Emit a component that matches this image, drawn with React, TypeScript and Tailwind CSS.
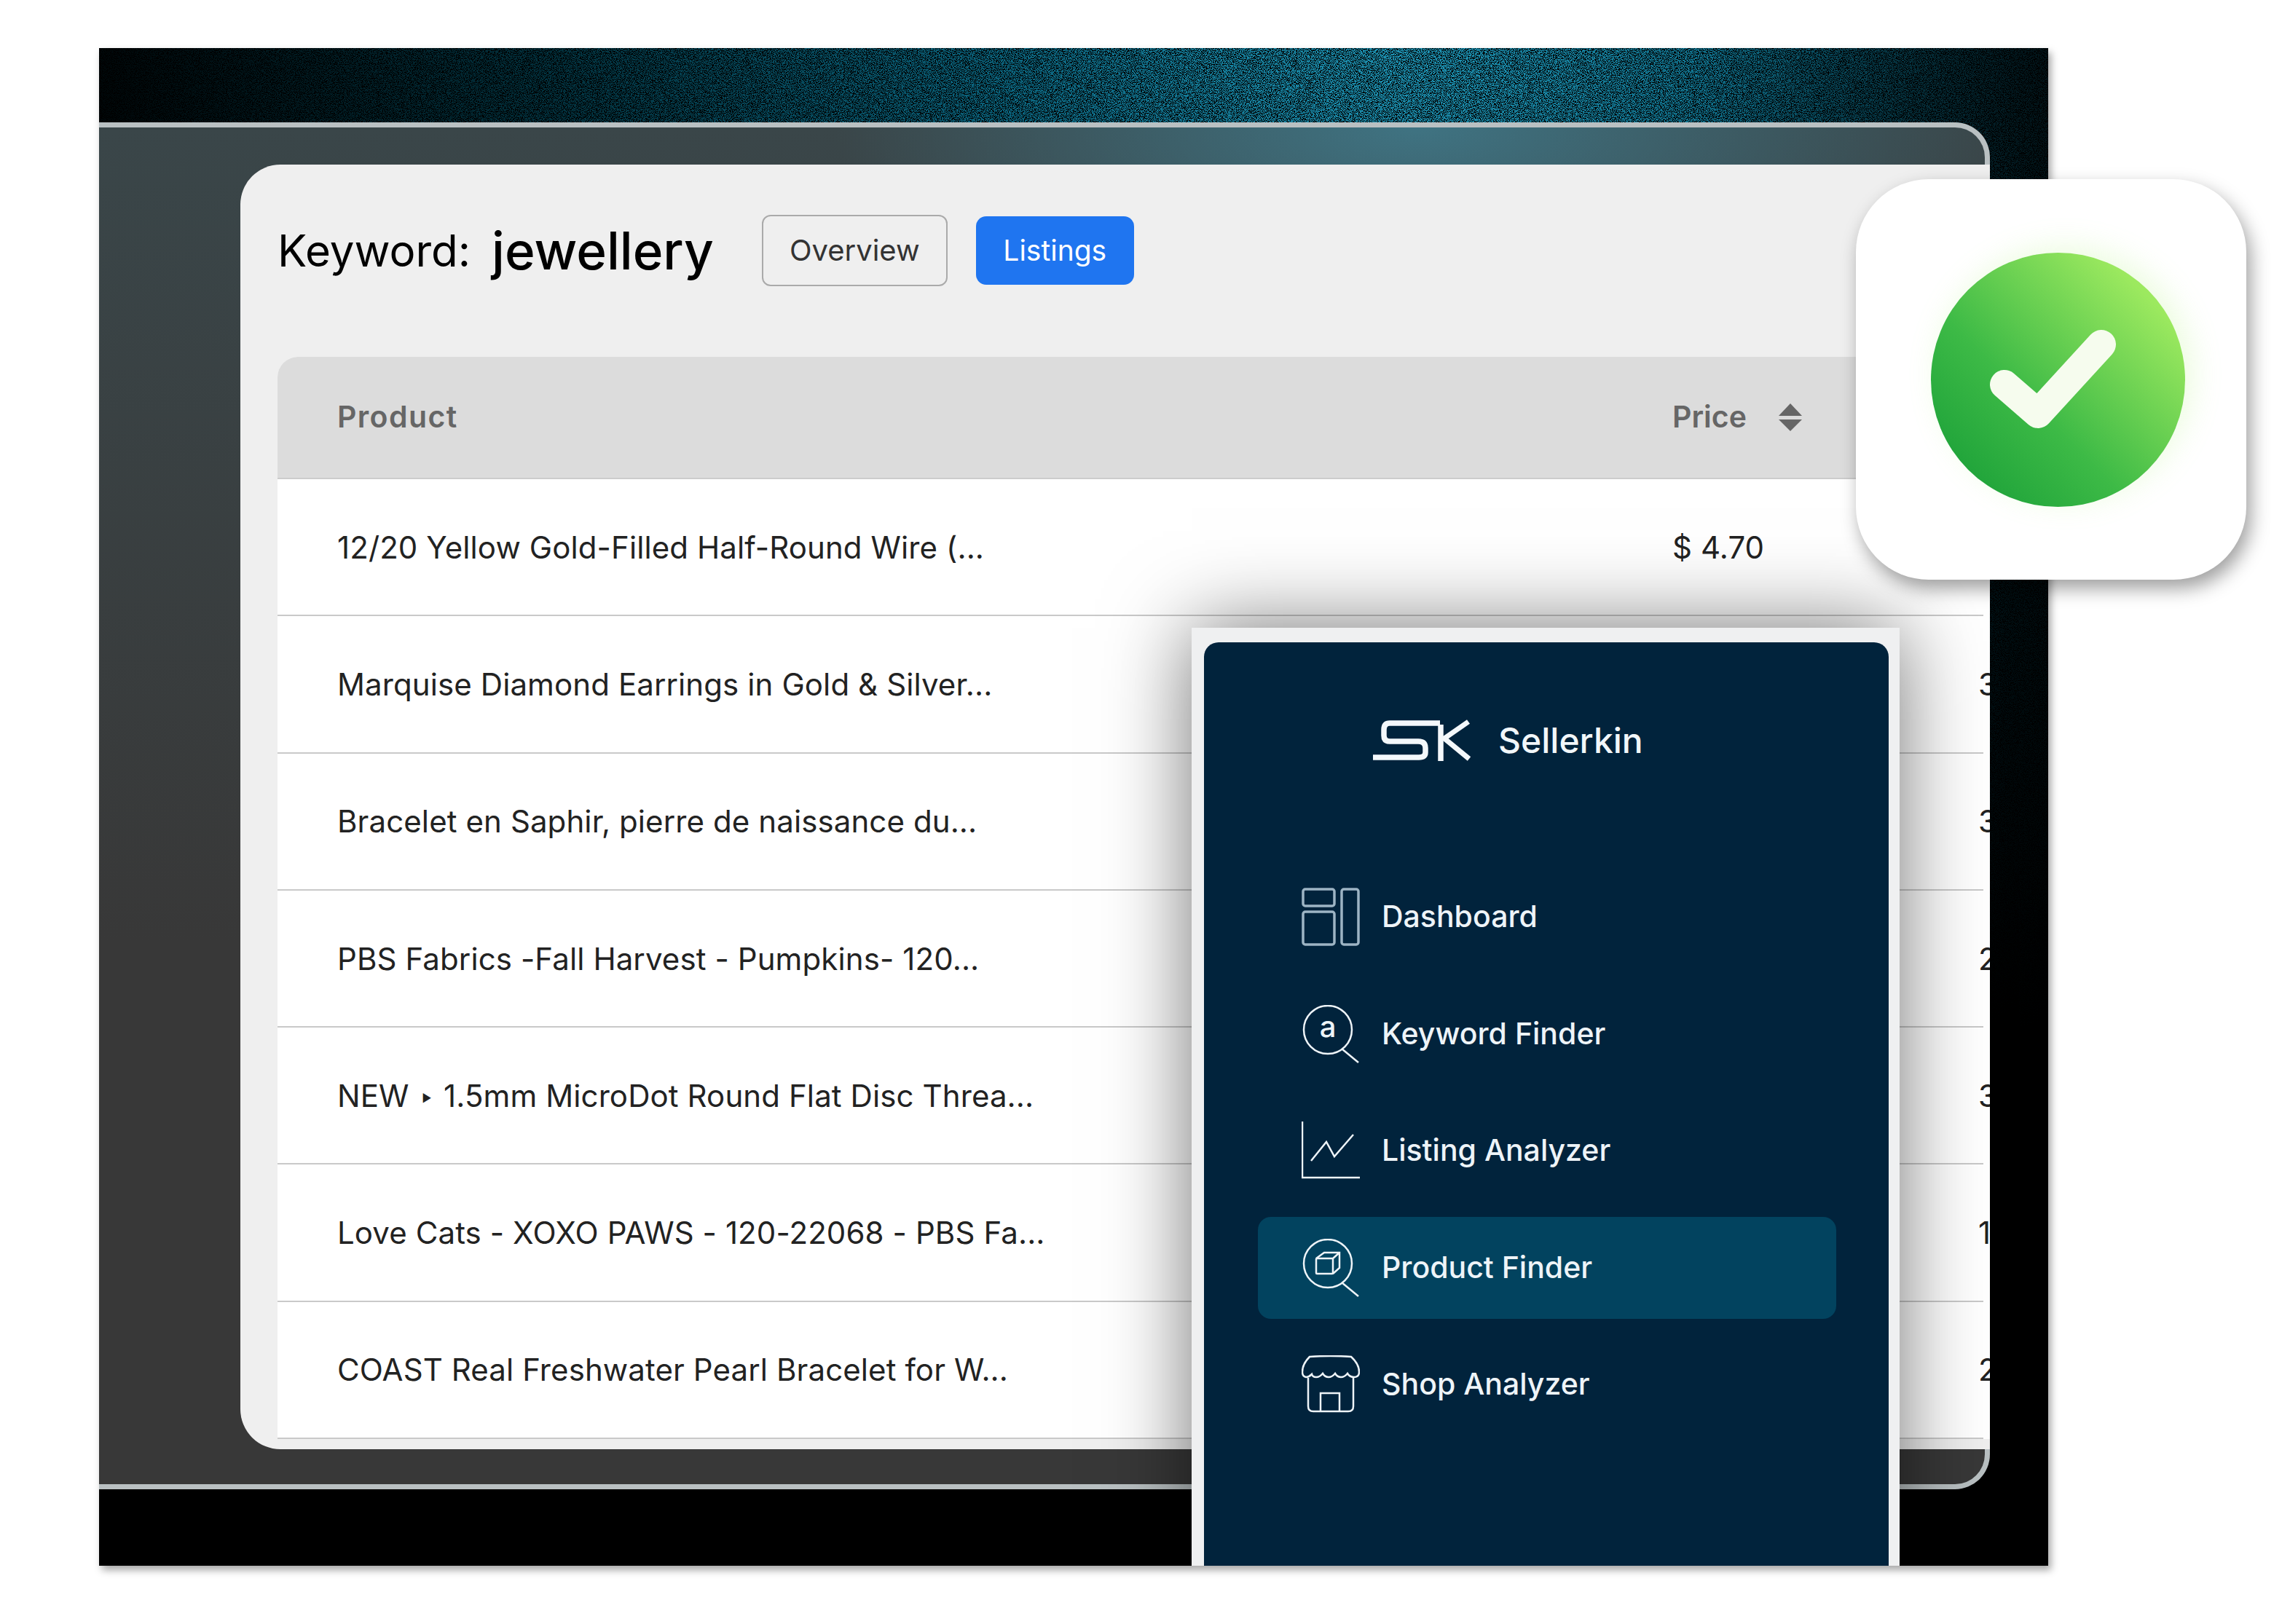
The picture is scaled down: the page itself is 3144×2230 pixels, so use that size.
const rows = [
  { name: '12/20 Yellow Gold-Filled Half-Round Wire (...', price: '$ 4.70', sales: '' },
  { name: 'Marquise Diamond Earrings in Gold & Silver...', price: '', sales: '3' },
  { name: 'Bracelet en Saphir, pierre de naissance du...', price: '', sales: '3' },
  { name: 'PBS Fabrics -Fall Harvest - Pumpkins- 120...', price: '', sales: '2' },
  { name: 'NEW ‣ 1.5mm MicroDot Round Flat Disc Threa...', price: '', sales: '3' },
  { name: 'Love Cats - XOXO PAWS - 120-22068 - PBS Fa...', price: '', sales: '1' },
  { name: 'COAST Real Freshwater Pearl Bracelet for W...', price: '', sales: '2' },
]

function NoiseLayer() {
  return (
    <svg className="absolute inset-0 h-full w-full" aria-hidden="true">
      <filter id="speckle" x="0" y="0" width="100%" height="100%">
        <feTurbulence type="fractalNoise" baseFrequency="0.85" numOctaves="2" seed="7" />
        <feColorMatrix values="0 0 0 0 0  0 0 0 0 0  0 0 0 0 0  -14 0 0 0 7.2" />
      </filter>
      <rect width="100%" height="100%" filter="url(#speckle)" />
    </svg>
  )
}

function SortIcon() {
  return (
    <svg width="32" height="38" viewBox="0 0 32 38" className="ml-[44px]" fill="#666">
      <path d="M16 0 L32 17 H0 Z" />
      <path d="M0 22 H32 L16 38 Z" />
    </svg>
  )
}

function Logo() {
  return (
    <svg width="134" height="60" viewBox="0 0 134 60" fill="none" stroke="#f4f8fb" strokeWidth="7.5">
      <path d="M92 6 H23 Q15 6 15 15 V23 Q15 31 23 31 H62 Q72 31 72 40 V46 Q72 53 63 53 H0" />
      <path d="M93 8 V58" />
      <path d="M131 4 L98 27 L132 55" strokeWidth="7" />
    </svg>
  )
}

function DashboardIcon() {
  return (
    <svg width="80" height="80" viewBox="0 0 80 80" fill="none" stroke="#9db4c4" strokeWidth="3.5">
      <rect x="2" y="2" width="43" height="23" rx="3" />
      <rect x="2" y="33" width="43" height="45" rx="3" />
      <rect x="55" y="2" width="23" height="76" rx="3" />
    </svg>
  )
}

function KeywordIcon() {
  return (
    <svg width="80" height="80" viewBox="0 0 80 80" fill="none" stroke="#eef4f8" strokeWidth="2.5">
      <circle cx="36" cy="34" r="33" />
      <path d="M55 60 L78 79" />
      <text x="36" y="44" textAnchor="middle" fontFamily="Inter, sans-serif" fontSize="40" fill="#eef4f8" stroke="none">
        a
      </text>
    </svg>
  )
}

function ListingIcon() {
  return (
    <svg width="80" height="80" viewBox="0 0 80 80" fill="none" stroke="#eef4f8" strokeWidth="2.5">
      <path d="M1 0 V77 H80" />
      <path d="M13 54 L34 28 L45 48 L71 18" />
    </svg>
  )
}

function ProductIcon() {
  return (
    <svg width="80" height="80" viewBox="0 0 80 80" fill="none" stroke="#eef4f8" strokeWidth="2.5">
      <circle cx="36" cy="34" r="33" />
      <path d="M55 60 L78 79" />
      <rect x="20" y="27" width="23" height="21" rx="1" />
      <path d="M20 27 L31 19 H52 V40 L43 48 M43 27 L52 19" />
    </svg>
  )
}

function ShopIcon() {
  return (
    <svg width="80" height="80" viewBox="0 0 80 80" fill="none" stroke="#eef4f8" strokeWidth="2.5">
      <path d="M11 2 Q40 0 68 2 Q79 12 79 23 Q79 30 72 30 Q66 30 63 25 Q59 30 54 30 Q49 30 46 25 Q42 30 37 30 Q32 30 29 25 Q25 30 20 30 Q15 30 14 26 Q10 30 6 30 Q1 29 1 23 Q1 12 11 2 Z" />
      <path d="M9 31 V70 Q9 77 16 77 H64 Q71 77 71 70 V31" />
      <path d="M26 77 V52 H52 V77" />
    </svg>
  )
}

const nav = [
  { label: 'Dashboard', icon: <DashboardIcon /> },
  { label: 'Keyword Finder', icon: <KeywordIcon /> },
  { label: 'Listing Analyzer', icon: <ListingIcon /> },
  { label: 'Product Finder', icon: <ProductIcon />, active: true },
  { label: 'Shop Analyzer', icon: <ShopIcon /> },
]

function Sidebar() {
  return (
    <aside className="absolute left-[1500px] top-[796px] h-[1300px] w-[972px] bg-[#eff0f1] pl-[17px] pr-[15px] pt-[20px] shadow-[0_0_110px_rgba(0,0,0,0.55)]">
      <div className="h-full rounded-t-[20px] bg-[#01233c]">
        <div className="flex items-center gap-[38px] pl-[232px] pt-[99px]">
          <Logo />
          <span className="text-[48px] font-medium text-[#f2f7fa]">Sellerkin</span>
        </div>
        <nav className="ml-[74px] mr-[72px] mt-[136px] flex flex-col gap-[20.5px]">
          {nav.map((item) => (
            <div
              key={item.label}
              className={`flex h-[140px] items-center gap-[30px] rounded-[18px] pl-[60px] text-[41px] font-medium text-[#eef4f8] ${
                item.active ? 'bg-[#02435f]' : ''
              }`}
            >
              {item.icon}
              <span>{item.label}</span>
            </div>
          ))}
        </nav>
      </div>
    </aside>
  )
}

function CheckTile() {
  return (
    <div className="absolute left-[2548px] top-[246px] flex h-[550px] w-[536px] items-center rounded-[100px] bg-white pl-[103px] shadow-[6px_12px_26px_rgba(0,0,0,0.38)]">
      <div className="h-[349px] w-[349px] rounded-full bg-[linear-gradient(45deg,#1fa33a_12%,#3dba46_40%,#9ce95f_84%)] shadow-[10px_-8px_40px_rgba(170,240,110,0.22)]">
        <svg width="349" height="349" viewBox="0 0 349 349" fill="none">
          <path d="M101 181 L147 221 L234 126" stroke="#f6fcee" strokeWidth="40" strokeLinecap="round" strokeLinejoin="round" />
        </svg>
      </div>
    </div>
  )
}

export default function App() {
  return (
    <div className="relative h-[2230px] w-[3144px] overflow-hidden bg-white pl-[136px] pt-[66px] font-['Inter',sans-serif]">
      <div className="relative h-[2084px] w-[2676px] overflow-hidden bg-[linear-gradient(to_right,rgba(0,0,0,0)_82%,rgba(0,0,0,0.75)_100%),radial-gradient(ellipse_1900px_1500px_at_1800px_0px,#1f97b8_0%,#0b6680_30%,#023340_62%,#000_100%)] shadow-[4px_6px_10px_rgba(0,0,0,0.35)]">
        <NoiseLayer />

        <div className="relative mr-[80px] mt-[102px] h-[1877px] rounded-r-[48px] border-y-[7px] border-r-[7px] border-y-[#b9c0c2] border-r-[#b9c0c2] bg-[radial-gradient(ellipse_800px_300px_at_1810px_0px,#3f7382_0%,rgba(63,115,130,0)_100%),linear-gradient(#3a4649,#383838_60%)] pt-[51px]">
          <div className="-mr-[7px] ml-[194px] h-[1764px] overflow-hidden rounded-l-[55px] bg-[#efefef] pl-[51px]">
            <header className="mb-[28px] flex h-[236px] items-center">
              <h1 className="flex items-center text-black">
                <span className="text-[60px]">Keyword:</span>
                <span className="ml-[29px] text-[71px] font-medium">jewellery</span>
              </h1>
              <button className="ml-[66px] h-[98px] w-[255px] rounded-[12px] border-2 border-[#aaa] text-[40px] text-[#333]">Overview</button>
              <button className="ml-[39px] h-[94px] w-[217px] rounded-[14px] bg-[#1f75f0] text-[39px] text-white">Listings</button>
            </header>

            <section className="overflow-hidden rounded-tl-[28px] bg-white">
              <div className="grid h-[168px] grid-cols-[1915px_1fr] items-center border-b-2 border-[#ccc] bg-[#dcdcdc] text-[41px] font-semibold text-[#666]">
                <span className="pl-[82px] tracking-[1.4px]">Product</span>
                <div className="flex items-center">
                  <span>Price</span>
                  <SortIcon />
                </div>
              </div>
              {rows.map((row) => (
                <div
                  key={row.name}
                  className="mr-[9px] grid h-[188.3px] grid-cols-[1915px_420px_100px] items-center border-b-2 border-[#c9c9c9] text-[42px] tracking-[0.1px] text-[#222]"
                >
                  <span className="whitespace-nowrap pl-[82px]">{row.name}</span>
                  <span>{row.price}</span>
                  <span>{row.sales}</span>
                </div>
              ))}
            </section>
          </div>
        </div>

        <Sidebar />
      </div>
      <CheckTile />
    </div>
  )
}
